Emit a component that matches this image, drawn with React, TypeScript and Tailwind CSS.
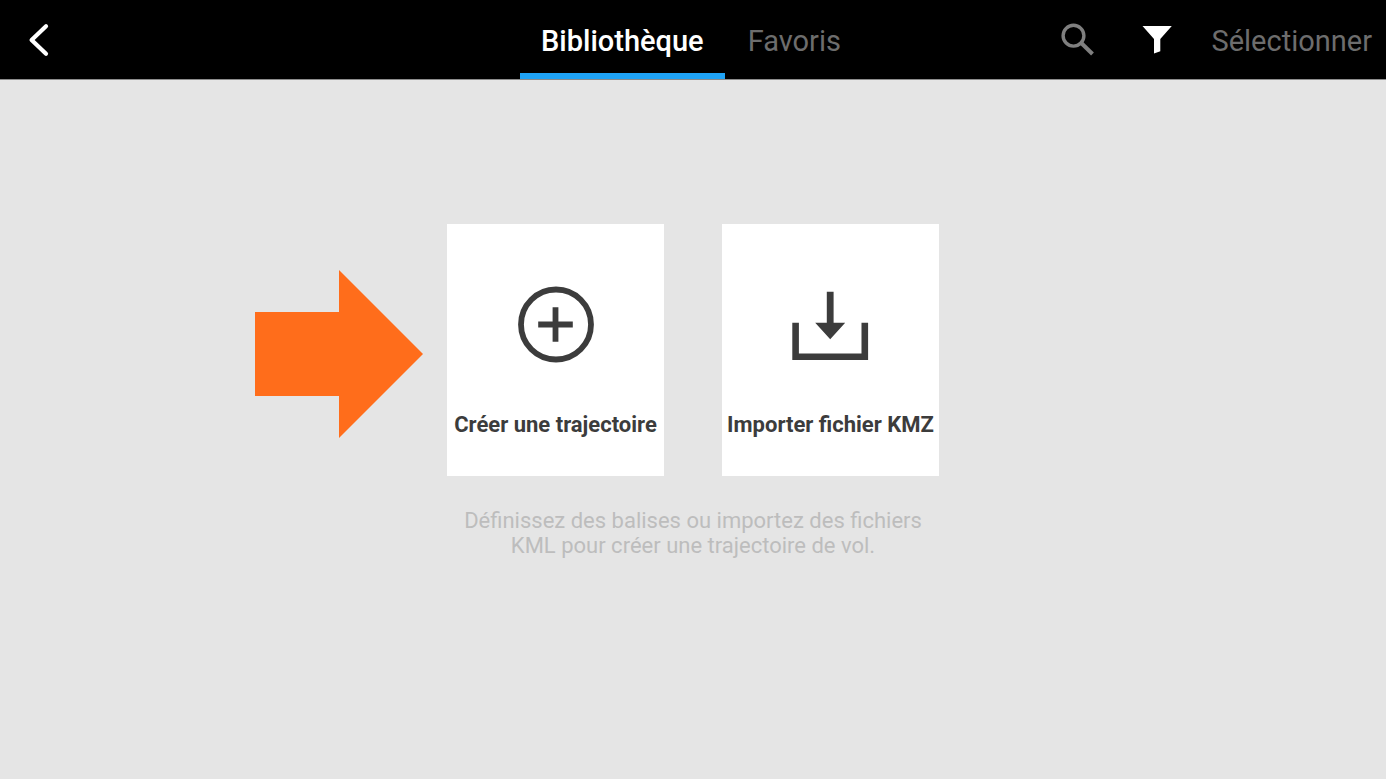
import { useState } from "react";
import type { ReactNode } from "react";
import clsx from "clsx";

const tabs = [
  { id: "library", label: "Bibliothèque" },
  { id: "favorites", label: "Favoris" },
];

function BackIcon() {
  return (
    <svg width="40" height="40" viewBox="0 0 40 40" fill="none" aria-hidden="true">
      <path
        d="M30 6.3 15.6 20 30 33.7"
        stroke="#fff"
        strokeWidth="4.2"
        strokeLinecap="round"
        strokeLinejoin="round"
      />
    </svg>
  );
}

function SearchIcon() {
  return (
    <svg width="40" height="40" viewBox="0 0 40 40" fill="none" stroke="#7f7f7f" aria-hidden="true">
      <circle cx="16.5" cy="15.7" r="10.4" strokeWidth="3.4" />
      <path d="M24 22.7 35.5 34" strokeWidth="4" />
    </svg>
  );
}

function FilterIcon() {
  return (
    <svg width="40" height="40" viewBox="0 0 40 40" fill="#fff" aria-hidden="true">
      <path d="M5.5 6h29.3L23.3 19v12.2L17 33.4V19z" />
    </svg>
  );
}

function CreateIcon() {
  return (
    <svg width="78" height="78" viewBox="0 0 78 78" fill="none" stroke="#3c3c3c" aria-hidden="true">
      <circle cx="39" cy="38.5" r="35" strokeWidth="5.8" />
      <path d="M38.5 21.2v34.6M21.2 38.5h34.6" strokeWidth="5.8" />
    </svg>
  );
}

function ImportIcon() {
  return (
    <svg width="78" height="78" viewBox="0 0 78 78" aria-hidden="true">
      <path d="M3.6 36.7v34h69.2v-34" fill="none" stroke="#3c3c3c" strokeWidth="6.6" />
      <path d="M34.8 5.7h6.8v31h11.6L38.2 53.2 23.2 36.7h11.6z" fill="#3c3c3c" />
    </svg>
  );
}

function Card({ icon, label }: { icon: ReactNode; label: string }) {
  return (
    <button
      type="button"
      className="flex w-[217px] flex-col items-center gap-12 bg-white pt-[62px] pb-[38px] text-[22px] leading-[26px] font-bold whitespace-nowrap text-[#3c3c3c]"
    >
      {icon}
      {label}
    </button>
  );
}

export default function App() {
  const [active, setActive] = useState("library");

  return (
    <div className="flex min-h-screen flex-col bg-[#e5e5e5] font-['Roboto','Liberation_Sans',sans-serif]">
      <header className="grid h-20 grid-cols-[1fr_auto_1fr] border-b border-[#8c8c8c] bg-black text-[29px] leading-9">
        <button type="button" aria-label="Retour" className="justify-self-start pl-4">
          <BackIcon />
        </button>

        <nav className="flex gap-0.5 pr-1">
          {tabs.map((tab) => (
            <button
              key={tab.id}
              type="button"
              onClick={() => setActive(tab.id)}
              className={clsx(
                "border-b-6 px-[21px] pt-2",
                active === tab.id
                  ? "border-[#1fa3f6] font-medium text-white"
                  : "border-transparent text-[#6d6d6d]"
              )}
            >
              {tab.label}
            </button>
          ))}
        </nav>

        <div className="flex items-center justify-end gap-[34px] pr-3.5">
          <div className="flex gap-10">
            <button type="button" aria-label="Rechercher">
              <SearchIcon />
            </button>
            <button type="button" aria-label="Filtrer">
              <FilterIcon />
            </button>
          </div>
          <button type="button" className="pt-0.5 text-[#6d6d6d]">
            Sélectionner
          </button>
        </div>
      </header>

      <main className="flex flex-1 flex-col pt-36">
        <div className="grid grid-cols-[1fr_auto_1fr] items-center gap-6">
          <svg
            width="168"
            height="168"
            viewBox="0 0 168 168"
            className="mt-2 justify-self-end"
            aria-hidden="true"
          >
            <path d="M0 42h84V0l84 84-84 84v-42H0z" fill="#ff6d1b" />
          </svg>
          <div className="flex gap-[58px]">
            <Card icon={<CreateIcon />} label="Créer une trajectoire" />
            <Card icon={<ImportIcon />} label="Importer fichier KMZ" />
          </div>
        </div>

        <p className="mx-auto mt-8 max-w-[480px] text-center text-[22px] leading-[25px] text-[#bdbdbd]">
          Définissez des balises ou importez des fichiers KML pour créer une trajectoire de vol.
        </p>
      </main>
    </div>
  );
}
